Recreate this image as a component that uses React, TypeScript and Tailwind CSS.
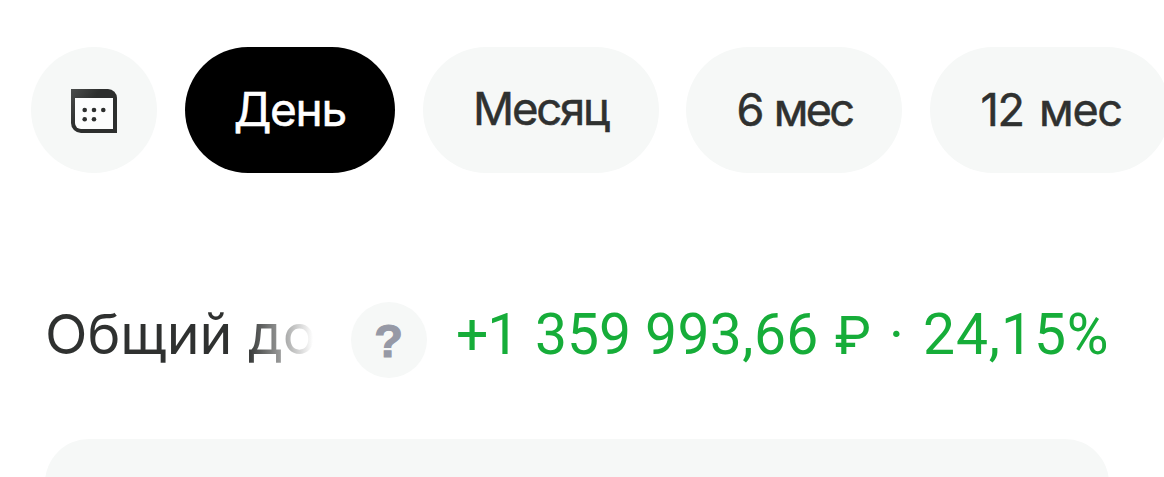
import clsx from "clsx";

interface Item {
  label: string
  className: string
}

const periods: Item[] = [
  { label: "День", className: "w-[210px] text-[46px] tracking-[-1.3px]" },
  { label: "Месяц", className: "w-[236px] text-[45.5px] tracking-[-2.2px]" },
  { label: "6 мес", className: "w-[216px] text-[45px] tracking-[-2.7px] [word-spacing:2px]" },
  { label: "12 мес", className: "w-[240px] pl-0.5 text-[45px] tracking-[-1.3px] [word-spacing:4px]" },
]

const incomeParts: Item[] = [
  { label: "+1", className: "w-[79px] tracking-[-1px]" },
  { label: "359", className: "w-[110px]" },
  { label: "993,66", className: "w-[190px] tracking-[0.4px]" },
  { label: "₽", className: "w-[54px] text-[54px]" },
  { label: "·", className: "w-[34px]" },
  { label: "24,15%", className: "tracking-[0.9px]" },
]

function CalendarIcon() {
  return (
    <svg width="46" height="44" viewBox="0 0 46 44" fill="none" className="mt-[2px]">
      <defs>
        <linearGradient id="frame" x1="0" y1="0" x2="20" y2="14" gradientUnits="userSpaceOnUse">
          <stop stopColor="#4c4e4d" />
          <stop offset="1" stopColor="#2d2f2e" />
        </linearGradient>
      </defs>
      <path d="M0 0H37A9 9 0 0 1 46 9V44H10A10 10 0 0 1 0 34Z" fill="url(#frame)" />
      <path d="M4 9H42V40H10A6 6 0 0 1 4 34Z" fill="#fcfdfd" />
      <g fill="#2d2f2e">
        <circle cx="13.7" cy="21" r="2.3" />
        <circle cx="23" cy="21" r="2.3" />
        <circle cx="32.3" cy="21" r="2.3" />
        <circle cx="13.7" cy="30.3" r="2.3" />
        <circle cx="23" cy="30.3" r="2.3" />
      </g>
    </svg>
  )
}

export default function App() {
  return (
    <div className="h-[477px] w-[1164px] overflow-hidden bg-white font-['Inter','Noto_Sans',sans-serif] text-[#2f3130]">
      <nav className="flex gap-[27.8px] pt-[47px] pl-[31px]">
        <button className="flex size-[126px] shrink-0 items-center justify-center rounded-full bg-[#f6f8f7]">
          <CalendarIcon />
        </button>

        {periods.map((period, index) => (
          <button
            key={period.label}
            className={clsx(
              "flex h-[126px] shrink-0 items-center justify-center rounded-full pb-px font-normal whitespace-nowrap [-webkit-text-stroke:0.5px]",
              index === 0 ? "bg-black text-white" : "bg-[#f6f8f7]",
              period.className
            )}
          >
            {period.label}
          </button>
        ))}
      </nav>

      <section className="mt-[129px] flex h-[76px] items-center">
        <h2 className="ml-[45px] w-[268px] shrink-0 overflow-hidden bg-linear-to-r from-[#2f3130] from-75% to-transparent bg-clip-text pb-3 text-[55.5px] leading-[64px] whitespace-nowrap text-transparent">
          Общий доход
        </h2>

        <button className="ml-[38px] flex size-[76px] shrink-0 items-center justify-center rounded-full bg-[#f6f8f7] pr-0.5 font-['Liberation_Sans',sans-serif] text-[47px] leading-none font-bold tracking-[-1px] text-[#9699a6] [-webkit-text-stroke:1.2px]">
          ?
        </button>

        <p className="ml-[29px] flex items-baseline pb-2.5 font-['Roboto',sans-serif] text-[57px] leading-[64px] font-normal whitespace-nowrap text-[#16ad39]">
          {incomeParts.map((part) => (
            <span key={part.label} className={part.className}>
              {part.label}
            </span>
          ))}
        </p>
      </section>

      <div className="mt-[61px] mr-[55px] ml-[45px] h-[200px] rounded-[44px] bg-[#f6f8f7]" />
    </div>
  )
}
